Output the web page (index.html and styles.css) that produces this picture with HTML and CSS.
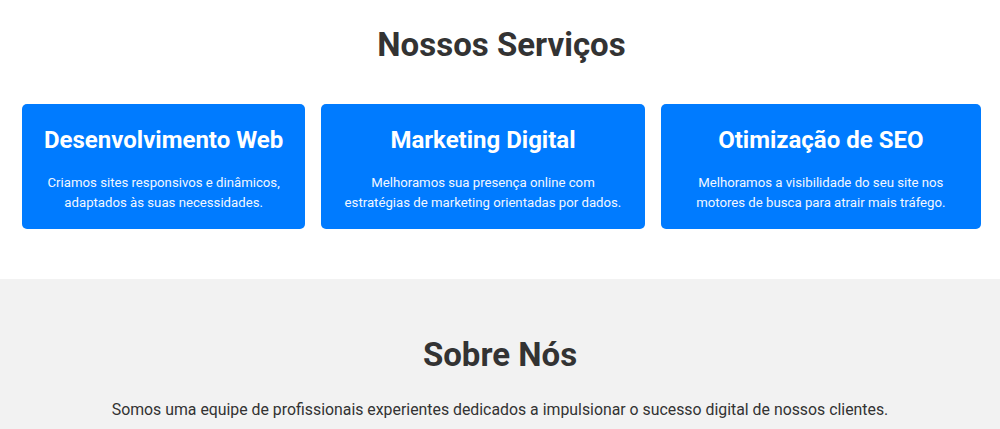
FILE: index.html
```html
<!DOCTYPE html>
<html lang="pt-BR">
<head>
<meta charset="utf-8">
<title>Serviços</title>
<link rel="stylesheet" href="styles.css">
</head>
<body>
  <section class="services">
    <h2 class="section-title">Nossos Serviços</h2>
    <div class="cards">
      <div class="card card-web">
        <h3 class="card-title">Desenvolvimento Web</h3>
        <p class="card-text">Criamos sites responsivos e dinâmicos, adaptados às suas necessidades.</p>
      </div>
      <div class="card card-mkt">
        <h3 class="card-title">Marketing Digital</h3>
        <p class="card-text">Melhoramos sua presença online com estratégias de marketing orientadas por dados.</p>
      </div>
      <div class="card card-seo">
        <h3 class="card-title">Otimização de SEO</h3>
        <p class="card-text">Melhoramos a visibilidade do seu site nos motores de busca para atrair mais tráfego.</p>
      </div>
    </div>
  </section>
  <section class="about">
    <h2 class="section-title">Sobre Nós</h2>
    <p class="about-text">Somos uma equipe de profissionais experientes dedicados a impulsionar o sucesso digital de nossos clientes.</p>
  </section>
</body>
</html>
```

FILE: styles.css
```css
* { box-sizing: border-box; }

body {
  margin: 0;
  font-family: Roboto, "Liberation Sans", Arial, sans-serif;
  color: #333;
  background: #fff;
}

.section-title {
  font-size: 33px;
  font-weight: 700;
  text-align: center;
  margin: 0;
  color: #333;
}

.services {
  padding: 25px 19px 50px 22px;
}

.services .section-title {
  margin-bottom: 40px;
}

.cards {
  display: grid;
  grid-template-columns: 283fr 323fr 320fr;
  column-gap: 16px;
}

.card {
  background: #007bff;
  color: #fff;
  border-radius: 5px;
  padding: 22px 18px 16px;
  text-align: center;
}

.card-title {
  margin: 0 0 19px;
  font-size: 24px;
  font-weight: 700;
}

.card-text {
  margin: 0;
  font-size: 13.2px;
  line-height: 20px;
  color: #f2f7ff;
}

.about {
  background: #f2f2f2;
  padding: 56px 20px 20px;
  text-align: center;
}

.about .section-title {
  margin-bottom: 26px;
}

.about-text {
  margin: 0;
  font-size: 15.85px;
  line-height: 20px;
}
```
